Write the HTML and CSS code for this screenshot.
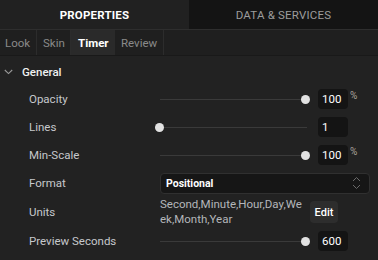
FILE: index.html
```html
<!DOCTYPE html>
<html>
<head>
<meta charset="utf-8">
<link rel="stylesheet" href="styles.css">
</head>
<body>
<div class="panel">
  <div class="tabs">
    <div class="tab tab-active">PROPERTIES</div>
    <div class="tab">DATA &amp; SERVICES</div>
  </div>
  <div class="subtabs">
    <div class="subtab st-look">Look</div>
    <div class="subtab st-skin">Skin</div>
    <div class="subtab st-timer subtab-active">Timer</div>
    <div class="subtab st-review">Review</div>
  </div>
  <div class="section">
    <div class="section-head">
      <svg class="chev" width="9" height="6" viewBox="0 0 9 6"><path d="M0.8 1 L4.5 4.6 L8.2 1" fill="none" stroke="#9a9a9a" stroke-width="1.1"/></svg>
      <span>General</span>
    </div>
    <div class="row">
      <div class="label">Opacity</div>
      <div class="control">
        <div class="slider"><div class="track"></div><div class="thumb" style="left:141px"></div></div>
        <div class="value">100</div><span class="unit">%</span>
      </div>
    </div>
    <div class="row">
      <div class="label">Lines</div>
      <div class="control">
        <div class="slider"><div class="track"></div><div class="thumb" style="left:-5px"></div></div>
        <div class="value">1</div>
      </div>
    </div>
    <div class="row">
      <div class="label">Min-Scale</div>
      <div class="control">
        <div class="slider"><div class="track"></div><div class="thumb" style="left:141px"></div></div>
        <div class="value">100</div><span class="unit">%</span>
      </div>
    </div>
    <div class="row">
      <div class="label">Format</div>
      <div class="control">
        <div class="select">
          <span>Positional</span>
          <svg width="9" height="14" viewBox="0 0 9 14"><path d="M1 5 L4.5 1.5 L8 5 M1 9 L4.5 12.5 L8 9" fill="none" stroke="#6a6a6a" stroke-width="1"/></svg>
        </div>
      </div>
    </div>
    <div class="row row-units">
      <div class="label">Units</div>
      <div class="control">
        <div class="units-text">Second,Minute,Hour,Day,Week,Month,Year</div>
        <div class="btn">Edit</div>
      </div>
    </div>
    <div class="row">
      <div class="label">Preview Seconds</div>
      <div class="control">
        <div class="slider"><div class="track"></div><div class="thumb" style="left:141px"></div></div>
        <div class="value">600</div>
      </div>
    </div>
  </div>
</div>
</body>
</html>
```
FILE: styles.css
```css
* { box-sizing: border-box; }
html, body { margin: 0; padding: 0; }
body {
  background: #222222;
  font-family: Roboto, "Liberation Sans", sans-serif;
  width: 378px;
  height: 260px;
  overflow: hidden;
}
.panel { width: 378px; }
.tabs {
  display: flex;
  height: 30px;
  border-bottom: 1px solid #2e2e2e;
}
.tab {
  flex: 1;
  display: flex;
  align-items: center;
  justify-content: center;
  font-size: 11.5px;
  color: #9c9c9c;
  background: #141414;
  letter-spacing: 0.2px;
}
.tab-active {
  background: #212121;
  color: #ffffff;
  font-weight: 700;
}
.subtabs {
  display: flex;
  height: 26px;
  background: #1f1f1f;
  border-bottom: 1px solid #191919;
}
.subtab {
  display: flex;
  align-items: center;
  font-size: 11.5px;
  color: #8a8a8a;
  border-right: 1px solid #2c2c2c;
}
.st-look { width: 37px; padding-left: 5px; }
.st-skin { width: 34px; padding-left: 6px; }
.st-timer { width: 44px; padding-left: 7px; }
.st-review { width: 49px; padding-left: 6px; }
.subtab-active {
  background: #2a2a2a;
  color: #ffffff;
  font-weight: 700;
  border-right: none;
}
.section { padding-top: 2px; }
.section-head {
  display: flex;
  align-items: center;
  height: 27px;
  font-size: 11.5px;
  font-weight: 500;
  color: #f0f0f0;
}
.chev { margin: 1px 9px 0 4px; }
.row {
  display: grid;
  grid-template-columns: 160px 1fr;
  align-items: center;
  height: 28px;
}
.row-units { height: 30px; }
.label {
  padding-left: 29px;
  font-size: 11.5px;
  color: #c6c8cc;
}
.control {
  display: flex;
  align-items: center;
}
.slider {
  position: relative;
  width: 147px;
  height: 9px;
}
.track {
  position: absolute;
  left: 0;
  right: 0;
  top: 4px;
  height: 1px;
  background: #3a3a3a;
}
.thumb {
  position: absolute;
  top: 0;
  width: 9px;
  height: 9px;
  border-radius: 50%;
  background: #e2e2e2;
}
.value {
  margin-left: 11px;
  width: 30px;
  height: 20px;
  border-radius: 4px;
  background: #141414;
  color: #ffffff;
  font-size: 11.5px;
  line-height: 20px;
  padding-left: 4px;
}
.unit {
  align-self: flex-start;
  margin: 1px 0 0 2px;
  font-size: 10px;
  color: #a9a49c;
}
.select {
  width: 210px;
  height: 21px;
  border: 1px solid #303030;
  border-radius: 4px;
  background: #161616;
  display: flex;
  align-items: center;
  justify-content: space-between;
  padding: 0 8px 0 5px;
  font-size: 10.5px;
  font-weight: 700;
  color: #ffffff;
}
.units-text {
  width: 145px;
  font-size: 11.5px;
  line-height: 15px;
  color: #b4b6ba;
  word-break: break-all;
}
.btn {
  margin-left: 5px;
  width: 28px;
  height: 22px;
  border-radius: 4px;
  background: #2d2d2d;
  color: #ffffff;
  font-size: 11px;
  font-weight: 500;
  display: flex;
  align-items: center;
  justify-content: center;
}
```
